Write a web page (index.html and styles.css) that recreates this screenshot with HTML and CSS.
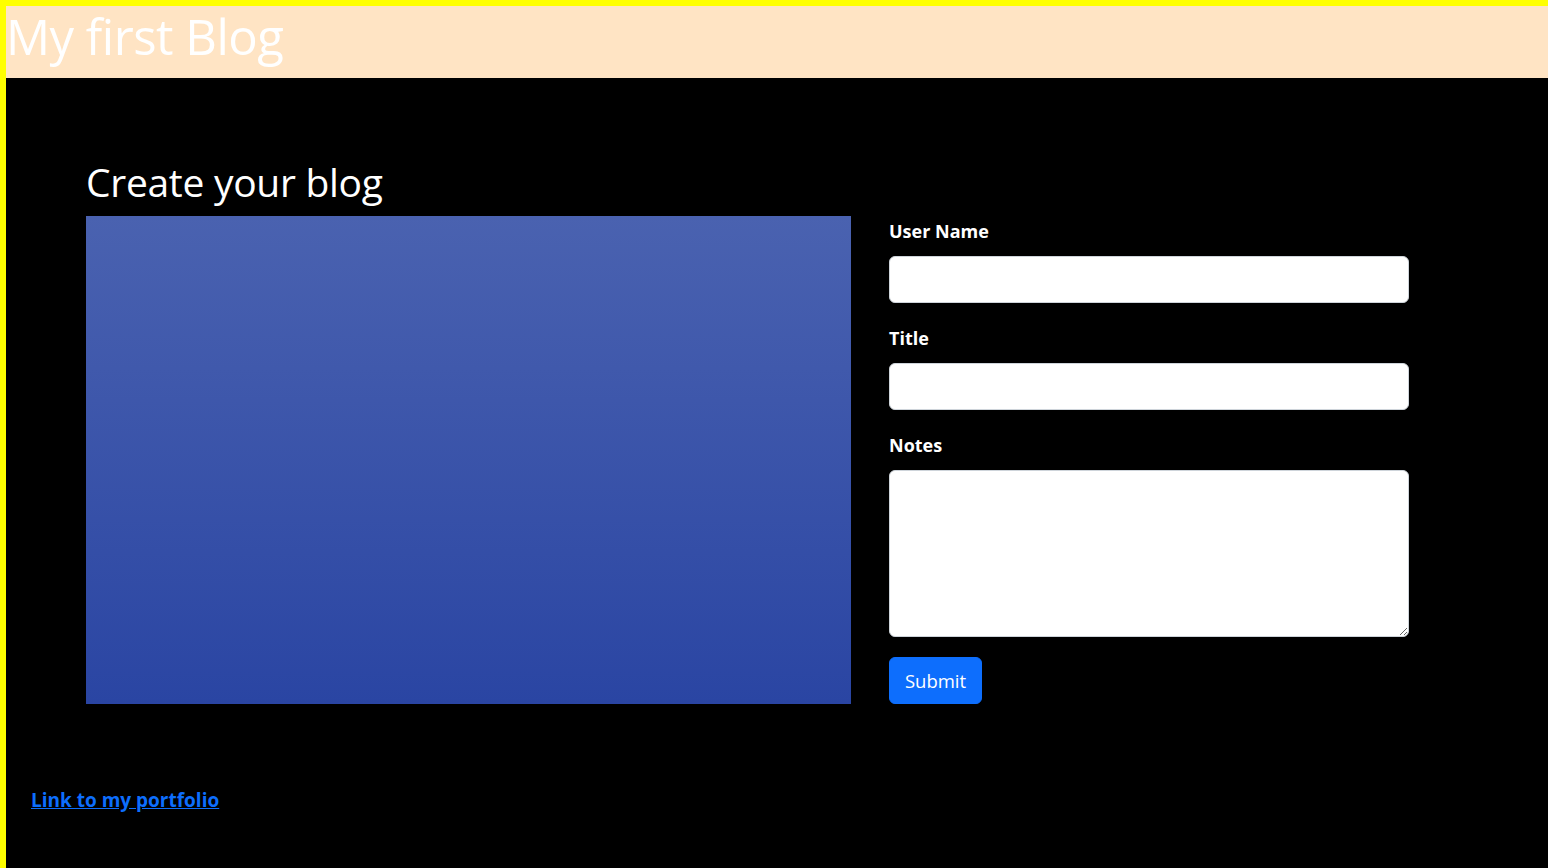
FILE: index.html
```html
<!DOCTYPE html>
<html lang="en">
<head>
<meta charset="utf-8">
<title>My first Blog</title>
<link rel="stylesheet" href="styles.css">
</head>
<body>
<div class="page">
  <header class="site-header">
    <h1 class="site-title">My first Blog</h1>
  </header>
  <main class="main">
    <h2 class="section-title">Create your blog</h2>
    <div class="row">
      <div class="picture"></div>
      <form class="blog-form">
        <label class="form-label" for="user">User Name</label>
        <input class="form-control" id="user" type="text">
        <label class="form-label" for="title">Title</label>
        <input class="form-control" id="title" type="text">
        <label class="form-label" for="notes">Notes</label>
        <textarea class="form-control notes" id="notes"></textarea>
        <div class="actions">
          <button class="btn" type="button">Submit</button>
        </div>
      </form>
    </div>
  </main>
  <footer class="footer">
    <a class="portfolio-link" href="#">Link to my portfolio</a>
  </footer>
</div>
</body>
</html>
```
FILE: styles.css
```css
* { box-sizing: border-box; }
html, body { margin: 0; padding: 0; background: #000; }
body {
  font-family: "Open Sans", "Noto Sans", sans-serif;
  color: #fff;
}
.page {
  min-height: 868px;
  border-top: 6px solid #ffff00;
  border-left: 6px solid #ffff00;
  background: #000;
}
.site-header {
  background: #ffe4c4;
  height: 72px;
}
.site-title {
  margin: 0;
  font-weight: 400;
  font-size: 49px;
  line-height: 60px;
  color: #fff;
  letter-spacing: -0.5px;
}
.main {
  padding: 78px 80px 0 80px;
}
.section-title {
  margin: 0 0 8px 0;
  font-weight: 400;
  font-size: 39px;
  line-height: 52px;
  letter-spacing: -0.3px;
}
.row {
  display: flex;
  gap: 38px;
  align-items: flex-start;
}
.picture {
  width: 765px;
  height: 488px;
  background: linear-gradient(to bottom, #4a62b0, #2a45a3);
}
.blog-form {
  width: 520px;
  display: flex;
  flex-direction: column;
}
.form-label {
  display: block;
  font-weight: 700;
  font-size: 18px;
  line-height: 30px;
  margin-bottom: 10px;
}
.form-control {
  display: block;
  width: 520px;
  height: 47px;
  border: 1px solid #ced4da;
  border-radius: 6px;
  background: #fff;
  margin: 0 0 20px 0;
  padding: 8px 16px;
  font: inherit;
}
.notes {
  height: 167px;
  resize: vertical;
}
.actions { display: flex; }
.btn {
  background: #0d6efd;
  color: #fff;
  border: 1px solid #0d6efd;
  border-radius: 6px;
  height: 47px;
  width: 93px;
  padding: 0;
  font-family: inherit;
  font-size: 18.5px;
  font-weight: 500;
}
.footer {
  padding: 83px 25px 40px 25px;
}
.portfolio-link {
  color: #0d6efd;
  font-weight: 700;
  font-size: 19px;
  text-decoration: underline;
}
```
